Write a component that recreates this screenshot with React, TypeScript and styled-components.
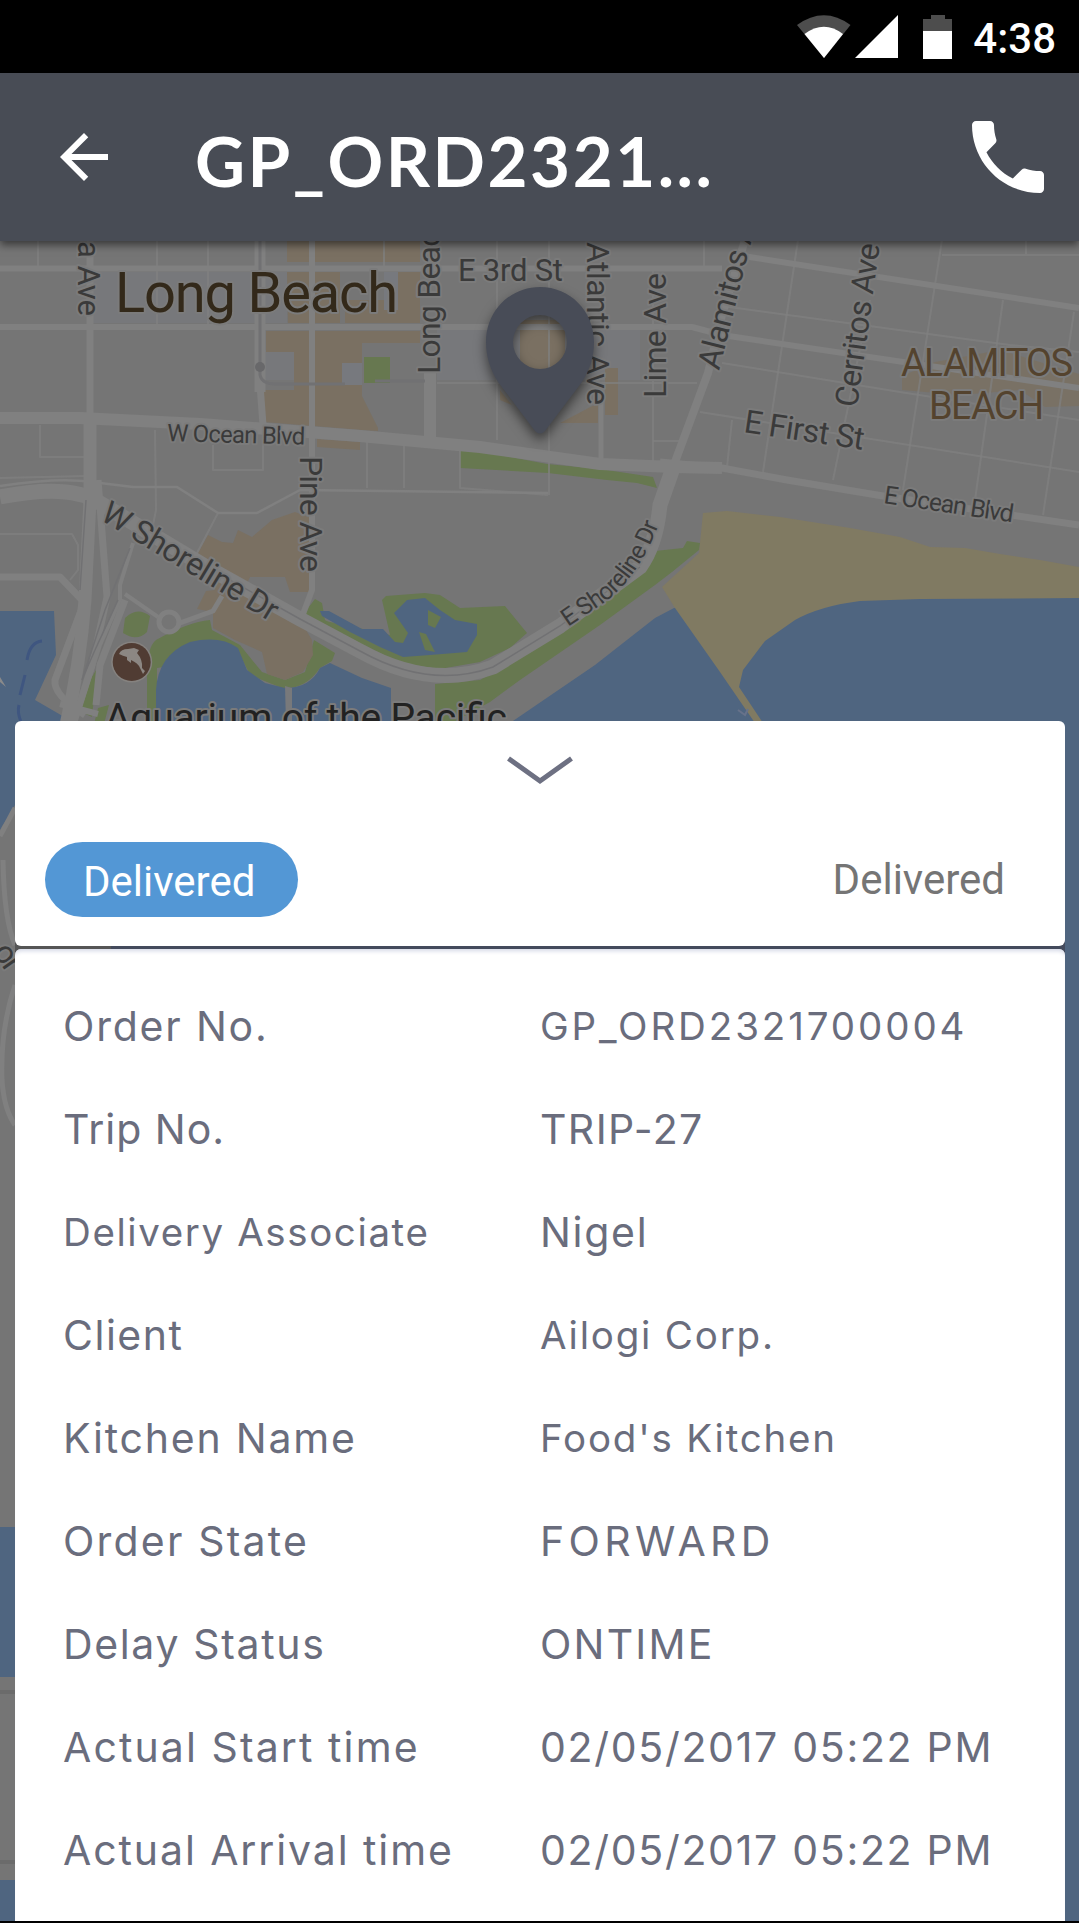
import styled, { createGlobalStyle } from 'styled-components';
import { MdArrowBack, MdPhone } from 'react-icons/md';

type Detail = {
  label: string;
  value: string;
  labelSpacing: number;
  valueSpacing: number;
  smallLabel?: boolean;
  smallValue?: boolean;
};

const details: Detail[] = [
  {
    label: 'Order No.',
    value: 'GP_ORD2321700004',
    labelSpacing: 1.8,
    valueSpacing: 2.9,
    smallValue: true,
  },
  { label: 'Trip No.', value: 'TRIP-27', labelSpacing: 1, valueSpacing: 1.4 },
  {
    label: 'Delivery Associate',
    value: 'Nigel',
    labelSpacing: 1.6,
    valueSpacing: 1.7,
    smallLabel: true,
  },
  {
    label: 'Client',
    value: 'Ailogi Corp.',
    labelSpacing: 1.5,
    valueSpacing: 1.8,
    smallValue: true,
  },
  {
    label: 'Kitchen Name',
    value: "Food's Kitchen",
    labelSpacing: 1.8,
    valueSpacing: 1.8,
    smallValue: true,
  },
  {
    label: 'Order State',
    value: 'FORWARD',
    labelSpacing: 2.2,
    valueSpacing: 4.35,
  },
  {
    label: 'Delay Status',
    value: 'ONTIME',
    labelSpacing: 1.65,
    valueSpacing: 2.2,
  },
  {
    label: 'Actual Start time',
    value: '02/05/2017 05:22 PM',
    labelSpacing: 2.1,
    valueSpacing: 1.7,
  },
  {
    label: 'Actual Arrival time',
    value: '02/05/2017 05:22 PM',
    labelSpacing: 1.9,
    valueSpacing: 1.7,
  },
];

const WATER = '#4f6580';
const PARK = '#677850';
const TAN = '#7a7062';
const SAND = '#807a62';
const ROAD = '#808080';

// 굵은 도로 [path, 두께]
const roads: [string, number][] = [
  ['M0 268.5H722', 6],
  ['M730 254L1079 308', 6],
  ['M0 327H692L722 335L1079 388', 6],
  ['M90 240V420', 7],
  ['M90 415V500L85 600Q80 665 66 725', 13],
  ['M98 480L107 597L92 665L74 722', 7],
  ['M260 240V392', 11],
  ['M260 385L263 425', 7],
  ['M312 240V590L300 622', 6],
  ['M0 418H80L200 424L360 436L480 447L600 464L674 467L722 468', 12],
  ['M660 462L722 468L787 480L883 496L1079 525', 7],
  ['M430 370V440', 12],
  ['M601 395V462', 5],
  ['M672 470L708 373L722 315L745 240', 8],
  ['M0 497Q70 483 100 503L203 565L300 619L360 651Q430 690 493 667L560 626L640 567Q656 545 660 505L673 468', 15],
  ['M0 486Q60 477 92 482L133 487H177L218 513H257L300 490L548 493', 2.5],
  ['M0 577H60L82 600', 7],
  ['M133 543L120 585V600L100 645L75 722', 4],
  ['M125 594L158 617', 4],
  ['M180 623L213 611L222 596', 5],
  ['M85 600L55 680Q53 695 85 715', 7],
  ['M125 600L100 665L96 705', 7],
  ['M60 704L98 714', 6],
];

// 골목길
const streets = [
  'M38 240V268M157 240V325M208 240V325',
  'M40 425V457H85M155 430L156 510L153 525M213 445V470H263V440',
  'M0 478L85 476M0 534H72L78 545V570L70 580M218 513L197 553',
  'M384 240V268M497 240V440M549 240V495M653 270V463M704 240V268',
  'M437 383H697M653 441H682M367 442V488M404 445V488M460 448V488L548 495',
  'M722 306L1010 345L1079 352M722 363L900 392L1079 420M700 412L1079 472',
  'M798 240L763 472M870 300L833 480M942 240L903 490M1003 300L975 500M1074 312L1043 515',
  'M1026 240V255M942 255H1079M732 420L727 467',
];

type LabelProps = {
  x: number;
  y: number;
  angle?: number;
  size: number;
  length: number;
  color?: string;
  children: string;
};

const MapText = ({
  x,
  y,
  angle = 0,
  size,
  length,
  color = '#3a3a3a',
  children,
}: LabelProps) => (
  <text
    transform={`translate(${x} ${y}) rotate(${angle})`}
    fontSize={size}
    fill={color}
    textLength={length}
  >
    {children}
  </text>
);

const CityMap = () => (
  <MapSvg viewBox="0 73 1079 1848">
    <rect y="73" width="1079" height="1848" fill="#757575" />
    <path d="M92 272H287V323H92ZM437 330H640V380H437ZM265 350H295V380H265ZM342 363H362V385H342Z" fill="#77787b" />

    <path
      fill={TAN}
      d="M287 240H420V262H287ZM287 272H340V323H288ZM390 272H420V323H345V300H390ZM266 331H420V343H362V430L264 422V390H294V352H266ZM317 439L360 442V450L317 447ZM360 392L378 428V431L360 430ZM605 368H618V415H605ZM560 423L598 403V423ZM500 390V400L512 405ZM520 320H565V370H520Z"
    />
    <path d="M342 363H362V385H342ZM384 272H398V310H384Z" fill="#77797e" />
    <path d="M902 376L935 362L1000 350L1079 374V406L1045 407L1020 390L960 395L902 390Z" fill={TAN} opacity="0.8" />
    <path d="M364 357H390V383H364ZM460 449L500 455L547 464L600 469L653 477L657 488L637 483L607 480L548 473L460 468Z" fill={PARK} />

    <path d="M0 611H54L56 655L35 700L66 718L60 760Q10 810 0 830Z" fill={WATER} />
    <path d="M510 723L595 665L655 618L674 608L740 590L1079 590V1921H510Z" fill={WATER} />
    <path
      fill={SAND}
      d="M703 513L727 511L780 517L850 528L900 537L930 547L965 548L1000 554L1040 560L1079 567V598L920 599L860 601Q820 606 795 620L765 641L743 670L739 687L763 723H755L720 672L675 608L662 587L699 553Z"
    />

    <path
      fill={PARK}
      d="M125 618Q137 606 150 616L147 632Q137 642 123 633ZM113 642L84 690L77 710L92 717L97 668ZM98 708L109 705L104 724H94ZM147 724V680Q146 648 156 640Q188 622 210 620L212 630L240 645L262 672L285 680L305 672L314 640L335 653L332 661L320 668Q305 690 282 688L250 675L240 655L157 668L157 724ZM305 612L315 599L322 603L325 620L365 644L362 655L300 622Z"
    />
    <path
      fill={WATER}
      d="M156 724V690Q158 655 190 642Q220 635 238 648L247 670L265 683L285 688Q310 688 320 668L330 663L362 678L391 688V724Z"
    />
    <path d="M285 686L292 688V724H286Z" fill="#78797b" />
    <path
      fill={PARK}
      d="M382 600L386 596L425 593L440 595L460 608L505 606L527 633L510 648L480 662L440 669L400 663L360 643L320 620L345 625L390 635ZM435 684L480 680L525 655L600 602L645 568L655 551L683 548L687 541L700 543L699 550L672 572L655 585L600 625L520 680L490 702L450 724H435Z"
    />
    <path
      fill={WATER}
      d="M320 611L329 611L362 629H383L395 642L403 643L408 633L394 613L407 600L425 598L440 610L455 620L477 624V635L467 652L430 655L403 657L380 647L350 632L322 616Z"
    />
    <path d="M428 610L441 617L435 628L428 625ZM419 632L426 634L435 652L425 650Z" fill={PARK} />
    <path
      fill={TAN}
      d="M208 535L222 542L233 543L238 530L252 537L272 520L295 512L311 518L310 592H290L285 577H250L245 588L270 600L300 620L312 640L313 655L303 672L285 680L267 674L262 652L235 640L213 628V612L197 609L206 591L215 590L198 553Z"
    />

    <g fill="none" stroke={ROAD} strokeLinejoin="round">
      {streets.map((d) => (
        <path key={d} d={d} strokeWidth="2" opacity="0.75" />
      ))}
      {roads.map(([d, width]) => (
        <path key={d} d={d} strokeWidth={width} />
      ))}
      <circle cx="169" cy="622" r="10" strokeWidth="5" />
    </g>
    <g fill="none" stroke="#717173" strokeWidth="1.5">
      <path d="M203 565L300 619L360 651Q430 690 493 667L560 626L640 567" />
      <path d="M86 500L80 590M130 548L105 610L82 680M118 600L95 650L84 675" />
      <path d="M260 240V375Q262 384 275 384H345" strokeWidth="3" />
      <path d="M375 381H425" strokeWidth="3" />
    </g>
    <circle cx="260" cy="367" r="5" fill="#68686a" />
    <path d="M42 641Q30 642 27 660M25 675L20 695M19 705Q17 712 21 722" fill="none" stroke="#3f5680" strokeWidth="3" />
    <path d="M0 677L6 687L0 682Z" fill="#8a8a8a" />
    <path d="M738 710L745 715L748 709" fill="none" stroke="#67728a" strokeWidth="2" />

    {/* 하단 시트 왼쪽에 드러나는 영역 */}
    <path d="M0 832L15 805V1527H0Z" fill="#757575" />
    <path d="M0 836L15 808M3 860Q4 920 15 945M15 985Q0 1030 2 1080Q4 1110 15 1125" fill="none" stroke={ROAD} strokeWidth="5" />
    <path d="M0 1527H16V1677H0ZM0 1880H16V1921H0Z" fill={WATER} />
    <path d="M0 1692H16M0 1862H16" stroke="#6b6b6b" strokeWidth="4" />
    <path d="M15 940H111V956H15Z" fill="#555" />
    <path d="M111 940H1065V956H111Z" fill="#434a5c" />

    <circle cx="131.7" cy="662" r="20.5" fill="#85827f" />
    <circle cx="131.7" cy="662" r="19" fill="#503c33" />
    <path
      fill="#8c8783"
      d="M119 654Q121 649 128 649L134 648L139 650L137 653Q143 660 142 668L145 671L143 674L141 670L140 668Q138 663 131 660L131 663L127 660L127 657Q123 656 119 654Z"
    />

    <g
      fontFamily="Roboto, sans-serif"
      stroke="#7b7b7b"
      strokeWidth="4"
      strokeLinejoin="round"
      paintOrder="stroke"
    >
      <MapText x={115} y={312} size={56} length={283} color="#33291a">
        Long Beach
      </MapText>
      <MapText x={458} y={281} size={31} length={105}>
        E 3rd St
      </MapText>
      <MapText x={78} y={241} angle={90} size={31} length={75}>
        a Ave
      </MapText>
      <MapText x={167} y={441} angle={1.5} size={24} length={138}>
        W Ocean Blvd
      </MapText>
      <MapText x={300} y={456} angle={90} size={32} length={116}>
        Pine Ave
      </MapText>
      <MapText x={440} y={374} angle={-90} size={32} length={144}>
        Long Beac
      </MapText>
      <MapText x={587} y={242} angle={90} size={32} length={163}>
        Atlantic Ave
      </MapText>
      <MapText x={666} y={398} angle={-90} size={32} length={125}>
        Lime Ave
      </MapText>
      <MapText x={719} y={371} angle={-76} size={32} length={150}>
        Alamitos A
      </MapText>
      <MapText x={857} y={408} angle={-82} size={32} length={165}>
        Cerritos Ave
      </MapText>
      <MapText x={901} y={376} size={38} length={172} color="#54432e">
        ALAMITOS
      </MapText>
      <MapText x={929} y={419} size={38} length={115} color="#54432e">
        BEACH
      </MapText>
      <MapText x={743} y={432} angle={8.5} size={32} length={121}>
        E First St
      </MapText>
      <MapText x={883} y={503} angle={8.5} size={25} length={131}>
        E Ocean Blvd
      </MapText>
      <MapText x={99} y={519} angle={31} size={32} length={200}>
        W Shoreline Dr
      </MapText>
      <path id="shoreline" d="M568 627L602 604Q641 578 664 510" fill="none" stroke="none" />
      <text fontSize="24.5" fill="#3a3a3a" letterSpacing="-0.9">
        <textPath href="#shoreline">E Shoreline Dr</textPath>
      </text>
      <MapText x={105} y={731} size={39} length={402} color="#222">
        Aquarium of the Pacific
      </MapText>
      <MapText x={-8} y={952} angle={55} size={32} length={27}>
        or
      </MapText>
    </g>
  </MapSvg>
);

const LocationPin = () => (
  <PinSvg viewBox="0 0 108 148">
    <path
      fillRule="evenodd"
      fill="#484c57"
      d="M54 0C24 0 0 24 0 55C0 70 4 82 12 95L49 144Q54 149 59 144L96 95C104 82 108 70 108 55C108 24 84 0 54 0ZM54 28A27 27 0 1 1 54 82A27 27 0 1 1 54 28Z"
    />
  </PinSvg>
);

const App = () => (
  <Screen>
    <GlobalStyle />
    <StatusBar>
      <WifiSvg viewBox="0 0 54 43">
        <path d="M0 10Q27 -9.5 53.5 10L27 43Z" fill="#4d4d4d" />
        <path d="M7.5 19Q27 4.5 46 19L27 43Z" fill="#fff" />
      </WifiSvg>
      <SignalSvg viewBox="0 0 43 43">
        <path d="M0 43L43 0V43Z" fill="#fff" />
      </SignalSvg>
      <BatterySvg viewBox="0 0 29 44">
        <path d="M8 0H22V4H29V16H0V4H8Z" fill="#4d4d4d" />
        <path d="M0 16H29V44H0Z" fill="#fff" />
      </BatterySvg>
      <Clock>4:38</Clock>
    </StatusBar>
    <Header>
      <MdArrowBack size={72} />
      <Title>GP_ORD2321...</Title>
      <MdPhone size={96} />
    </Header>
    <Content>
      <CityMap />
      <LocationPin />
      <Sheet>
        <StatusCard>
          <ChevronSvg viewBox="0 0 66 30">
            <path d="M1.5 2.5L33 25L64.5 2.5" fill="none" stroke="#6d7082" strokeWidth="5" />
          </ChevronSvg>
          <StatusRow>
            <StatusPill>Delivered</StatusPill>
            <StatusText>Delivered</StatusText>
          </StatusRow>
        </StatusCard>
        <DetailCard>
          {details.map((detail) => (
            <DetailRow key={detail.label}>
              <DetailText
                $spacing={detail.labelSpacing}
                $small={detail.smallLabel}
              >
                {detail.label}
              </DetailText>
              <DetailText
                $spacing={detail.valueSpacing}
                $small={detail.smallValue}
              >
                {detail.value}
              </DetailText>
            </DetailRow>
          ))}
        </DetailCard>
      </Sheet>
    </Content>
  </Screen>
);

const GlobalStyle = createGlobalStyle`
  * {
    box-sizing: border-box;
  }
  body {
    margin: 0;
    background-color: #000;
  }
`;

const Screen = styled.div`
  display: flex;
  flex-direction: column;
  width: 1079px;
  height: 1923px;
  padding-bottom: 2px;
  overflow: hidden;
  background-color: #000;
  font-family: Roboto, sans-serif;
`;

const StatusBar = styled.div`
  display: flex;
  justify-content: flex-end;
  flex-shrink: 0;
  height: 73px;
  padding: 15px 23px 0 0;
`;

const WifiSvg = styled.svg`
  width: 54px;
  height: 43px;
`;

const SignalSvg = styled.svg`
  width: 43px;
  height: 43px;
  margin-left: 4px;
`;

const BatterySvg = styled.svg`
  width: 29px;
  height: 44px;
  margin: 0 21px 0 25px;
`;

const Clock = styled.span`
  color: #fff;
  font-size: 42px;
  font-weight: 500;
  line-height: 47px;
`;

const Header = styled.header`
  position: relative;
  z-index: 1;
  display: flex;
  align-items: center;
  flex-shrink: 0;
  height: 168px;
  padding: 0 23px 0 48px;
  background-color: #484c55;
  color: #fff;
  box-shadow: 0 4px 8px rgba(0, 0, 0, 0.5);
`;

const Title = styled.h1`
  flex: 1;
  margin: 6px 0 0 75px;
  font-family: Lato, sans-serif;
  font-size: 69px;
  font-weight: 700;
  letter-spacing: 2.5px;
`;

const Content = styled.main`
  position: relative;
  flex: 1;
  min-height: 0;
`;

const MapSvg = styled.svg`
  position: absolute;
  top: -168px;
  left: 0;
  width: 1079px;
  height: 1848px;
`;

const PinSvg = styled.svg`
  position: absolute;
  top: 46px;
  left: 486px;
  width: 108px;
  height: 148px;
  overflow: visible;
  filter: drop-shadow(0 6px 6px rgba(0, 0, 0, 0.5));
`;

const Sheet = styled.section`
  position: relative;
  display: flex;
  flex-direction: column;
  gap: 3px;
  height: 100%;
  padding: 480px 14px 0 15px;
`;

const StatusCard = styled.div`
  display: flex;
  flex-direction: column;
  align-items: center;
  height: 225px;
  padding-top: 35px;
  border-radius: 6px;
  background-color: #fff;
`;

const ChevronSvg = styled.svg`
  width: 66px;
  height: 30px;
`;

const StatusRow = styled.div`
  display: flex;
  align-items: center;
  justify-content: space-between;
  width: 100%;
  margin-top: 54px;
  padding: 0 60px 0 30px;
`;

const StatusPill = styled.span`
  width: 253px;
  height: 75px;
  padding-left: 38px;
  border-radius: 38px;
  background-color: #5397d5;
  color: #fff;
  font-size: 42px;
  line-height: 79px;
`;

const StatusText = styled.span`
  color: #757575;
  font-size: 42px;
  line-height: 79px;
`;

const DetailCard = styled.div`
  flex: 1;
  padding: 25px 0 0 48px;
  border-radius: 6px 6px 0 0;
  background-color: #fff;
  box-shadow: inset 0 5px 4px -3px #d4d8e6;
`;

const DetailRow = styled.div`
  display: grid;
  grid-template-columns: 477px 1fr;
  align-items: center;
  height: 103px;
`;

const DetailText = styled.span<{ $spacing: number; $small?: boolean }>`
  color: #6a6d7d;
  font-family: Inter, sans-serif;
  font-size: ${({ $small }) => ($small ? 38.5 : 41)}px;
  font-weight: 400;
  letter-spacing: ${({ $spacing }) => $spacing}px;
  white-space: nowrap;
`;

export default App;
